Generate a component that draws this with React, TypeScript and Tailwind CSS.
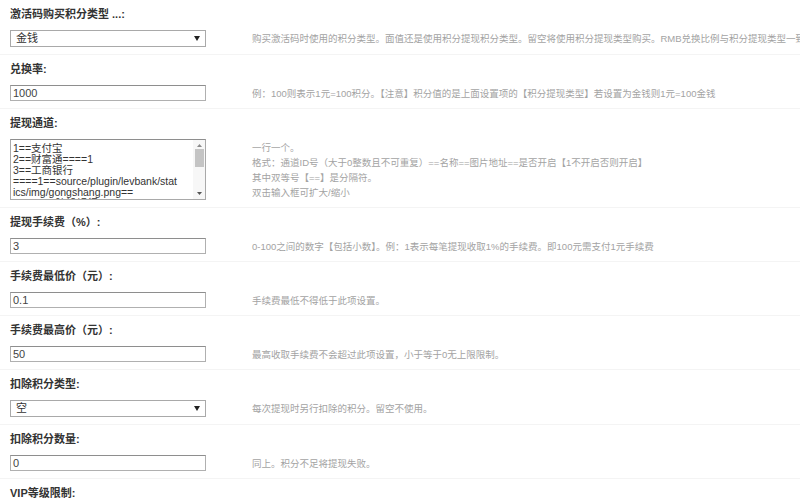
import type { ReactNode } from 'react'

type Row = {
  label: string
  kind: 'select' | 'input' | 'textarea'
  value?: string
  tips: string[]
}

const ROWS: Row[] = [
  {
    label: '激活码购买积分类型 ...:',
    kind: 'select',
    value: '金钱',
    tips: ['购买激活码时使用的积分类型。面值还是使用积分提现积分类型。留空将使用积分提现类型购买。RMB兑换比例与积分提现类型一致'],
  },
  {
    label: '兑换率:',
    kind: 'input',
    value: '1000',
    tips: ['例：100则表示1元=100积分。【注意】积分值的是上面设置项的【积分提现类型】若设置为金钱则1元=100金钱'],
  },
  {
    label: '提现通道:',
    kind: 'textarea',
    tips: [
      '一行一个。',
      '格式：通道ID号（大于0整数且不可重复）==名称==图片地址==是否开启【1不开启否则开启】',
      '其中双等号【==】是分隔符。',
      '双击输入框可扩大/缩小',
    ],
  },
  {
    label: '提现手续费（%）:',
    kind: 'input',
    value: '3',
    tips: ['0-100之间的数字【包括小数】。例：1表示每笔提现收取1%的手续费。即100元需支付1元手续费'],
  },
  {
    label: '手续费最低价（元）:',
    kind: 'input',
    value: '0.1',
    tips: ['手续费最低不得低于此项设置。'],
  },
  {
    label: '手续费最高价（元）:',
    kind: 'input',
    value: '50',
    tips: ['最高收取手续费不会超过此项设置，小于等于0无上限限制。'],
  },
  {
    label: '扣除积分类型:',
    kind: 'select',
    value: '空',
    tips: ['每次提现时另行扣除的积分。留空不使用。'],
  },
  {
    label: '扣除积分数量:',
    kind: 'input',
    value: '0',
    tips: ['同上。积分不足将提现失败。'],
  },
]

const CHANNELS = [
  '1==支付宝',
  '2==财富通====1',
  '3==工商银行',
  '====1==source/plugin/levbank/stat',
  'ics/img/gongshang.png==',
  '====1==建设银行',
]

function SelectBox({ value }: { value: string }) {
  return (
    <div className="h-[17px] w-[196px] border border-[#a9a9a9] bg-white flex items-center justify-between pl-[5px] pr-[5px] text-[11px] text-[#333]">
      <span>{value}</span>
      <svg width="6" height="5" viewBox="0 0 6 5">
        <path d="M0 0h6L3 5z" fill="#222" />
      </svg>
    </div>
  )
}

function TextBox({ value }: { value: string }) {
  return (
    <div className="h-[16px] w-[196px] border border-[#b0b0b0] border-t-[#8e8e8e] bg-white flex items-center pl-[2px] text-[11px] text-[#444]">
      {value}
    </div>
  )
}

function ChannelBox() {
  return (
    <div className="h-[61px] w-[196px] border border-[#a9a9a9] border-t-[#8e8e8e] bg-white flex overflow-hidden">
      <div className="flex-1 pl-[2px] pt-[3px] text-[10.5px] leading-[11px] text-[#333] whitespace-nowrap overflow-hidden">
        {CHANNELS.map((line) => (
          <div key={line}>{line}</div>
        ))}
      </div>
      <div className="w-[12px] bg-[#f7f7f7] flex flex-col items-center py-[4px]">
        <svg width="5" height="3" viewBox="0 0 5 3">
          <path d="M0 3h5L2.5 0z" fill="#8a8a8a" />
        </svg>
        <div className="w-[9px] h-[18px] bg-[#c4c4c4] mt-[2px] mb-auto" />
        <svg width="5" height="3" viewBox="0 0 5 3">
          <path d="M0 0h5L2.5 3z" fill="#555" />
        </svg>
      </div>
    </div>
  )
}

function Setting({ row }: { row: Row }) {
  let control: ReactNode
  if (row.kind === 'select') control = <SelectBox value={row.value ?? ''} />
  else if (row.kind === 'textarea') control = <ChannelBox />
  else control = <TextBox value={row.value ?? ''} />

  return (
    <div>
      <div className="h-[30px] pl-[10px] pt-[6px] text-[11px] leading-[16px] font-bold text-[#333]">
        {row.label}
      </div>
      <div className="flex items-center border-b border-[#f4f4f4] pb-[7px]">
        <div className="w-[252px] shrink-0 pl-[10px]">{control}</div>
        <div className="text-[9.5px] leading-[15px] text-[#a3a3a3] whitespace-nowrap">
          {row.tips.map((t) => (
            <div key={t}>{t}</div>
          ))}
        </div>
      </div>
    </div>
  )
}

export default function App() {
  return (
    <div
      className="w-[800px] h-[504px] overflow-hidden bg-white"
      style={{ fontFamily: '"Liberation Sans", "Noto Sans CJK SC", sans-serif' }}
    >
      {ROWS.map((row) => (
        <Setting key={row.label} row={row} />
      ))}
      <div className="h-[30px] pl-[10px] pt-[6px] text-[11px] leading-[16px] font-bold text-[#333]">
        VIP等级限制:
      </div>
    </div>
  )
}
